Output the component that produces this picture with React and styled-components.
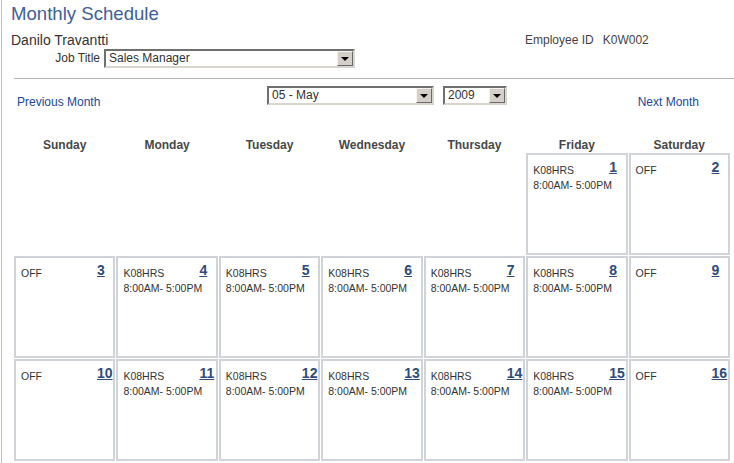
import React from "react";
import styled, { createGlobalStyle } from "styled-components";

const GlobalStyle = createGlobalStyle`
  html, body {
    margin: 0;
    padding: 0;
    background: #fff;
    overflow: hidden;
  }
  body {
    font-family: "Liberation Sans", Arial, sans-serif;
    color: #333;
  }
`;

const Page = styled.div`
  margin-left: 1px;
  border-left: 1px solid #c2c2c2;
  min-height: 463px;
  padding-left: 9px;
  box-sizing: border-box;
`;

const Title = styled.h1`
  margin: 0;
  padding-top: 2px;
  font-size: 18.6px;
  line-height: 24px;
  font-weight: normal;
  color: #40609a;
`;

const NameRow = styled.div`
  display: grid;
  grid-template-columns: 514px auto;
  margin-top: 6px;
  line-height: 16px;
`;

const EmployeeName = styled.div`
  font-size: 14px;
  color: #333;
`;

const EmployeeId = styled.div`
  display: flex;
  gap: 9px;
  font-size: 12px;
  color: #444;
`;

const JobRow = styled.div`
  display: flex;
  align-items: center;
  gap: 4px;
  margin-top: 1px;
  height: 19px;
`;

const Label = styled.label`
  width: 89px;
  text-align: right;
  font-size: 12px;
  line-height: 19px;
  color: #333;
`;

const Divider = styled.div`
  margin: 10px 0 0 3px;
  border-top: 1px solid #b4b4b4;
`;

const NavRow = styled.div`
  display: grid;
  grid-template-columns: 250px auto 1fr;
  align-items: start;
  height: 23px;
  margin-top: 7px;
  padding-left: 6px;
`;

const NavLink = styled.a`
  display: block;
  padding-top: 8px;
  font-size: 12px;
  line-height: 16px;
  color: #21489a;
  text-decoration: none;
  cursor: pointer;
  justify-self: ${(p) => (p.$end ? "end" : "start")};
  margin-right: ${(p) => (p.$end ? "35px" : "0")};
`;

const SelectGroup = styled.div`
  display: flex;
  gap: 9px;
`;

const SelectBox = styled.div`
  box-sizing: border-box;
  display: flex;
  align-items: center;
  width: ${(p) => p.$width}px;
  height: 19px;
  border: 2px solid;
  border-color: #6f6f6f #d8d5ce #d8d5ce #6f6f6f;
  background: #fff;
  padding-left: 3px;
`;

const SelectValue = styled.span`
  flex: 1;
  font-size: 12px;
  line-height: 15px;
  color: #333;
  white-space: nowrap;
  overflow: hidden;
`;

const ArrowButton = styled.span`
  box-sizing: border-box;
  width: 16px;
  height: 15px;
  display: flex;
  align-items: center;
  justify-content: center;
  background: #d4d0c8;
  border: 1px solid;
  border-color: #f4f3ef #6a6a6a #6a6a6a #f4f3ef;

  &::after {
    content: "";
    border-left: 4px solid transparent;
    border-right: 4px solid transparent;
    border-top: 4px solid #000;
    margin-top: 1px;
  }
`;

const Calendar = styled.div`
  display: grid;
  grid-template-columns: repeat(7, 1fr);
  grid-template-rows: 23px repeat(3, 102px);
  column-gap: 1px;
  row-gap: 1px;
  width: 716px;
  margin: 20px 0 0 3px;
`;

const DayName = styled.div`
  padding-top: 9px;
  font-size: 12px;
  line-height: 14px;
  font-weight: bold;
  text-align: center;
  color: #484848;
`;

const Cell = styled.div`
  box-sizing: border-box;
  border: ${(p) => (p.$empty ? "none" : "2px solid #d0d3d8")};
  padding: 4px 0 0 5px;
`;

const CellTop = styled.div`
  display: grid;
  grid-template-columns: 76px auto;
  align-items: start;
`;

const ShiftCode = styled.div`
  margin-top: 4px;
  font-size: 10.5px;
  line-height: 15px;
  color: #333;
`;

const ShiftTime = styled.div`
  font-size: 10.5px;
  line-height: 15px;
  color: #333;
`;

const DayNumber = styled.a`
  font-size: 14px;
  line-height: 16px;
  font-weight: bold;
  color: #2e4b7c;
  text-decoration: underline;
  cursor: pointer;
`;

const days = ["Sunday", "Monday", "Tuesday", "Wednesday", "Thursday", "Friday", "Saturday"];

const weeks = [
  [null, null, null, null, null, 1, 2],
  [3, 4, 5, 6, 7, 8, 9],
  [10, 11, 12, 13, 14, 15, 16],
];

const DayCell = ({ day, weekday }) => {
  if (day === null) return <Cell $empty />;
  const off = weekday === 0 || weekday === 6;
  return (
    <Cell>
      <CellTop>
        <ShiftCode>{off ? "OFF" : "K08HRS"}</ShiftCode>
        <DayNumber>{day}</DayNumber>
      </CellTop>
      {!off && <ShiftTime>8:00AM- 5:00PM</ShiftTime>}
    </Cell>
  );
};

const Select = ({ width, value }) => (
  <SelectBox $width={width}>
    <SelectValue>{value}</SelectValue>
    <ArrowButton />
  </SelectBox>
);

export default function App() {
  return (
    <>
      <GlobalStyle />
      <Page>
        <Title>Monthly Schedule</Title>
        <NameRow>
          <EmployeeName>Danilo Travantti</EmployeeName>
          <EmployeeId>
            <span>Employee ID</span>
            <span>K0W002</span>
          </EmployeeId>
        </NameRow>
        <JobRow>
          <Label>Job Title</Label>
          <Select width={251} value="Sales Manager" />
        </JobRow>
        <Divider />
        <NavRow>
          <NavLink>Previous Month</NavLink>
          <SelectGroup>
            <Select width={167} value="05 - May" />
            <Select width={64} value="2009" />
          </SelectGroup>
          <NavLink $end>Next Month</NavLink>
        </NavRow>
        <Calendar>
          {days.map((d) => (
            <DayName key={d}>{d}</DayName>
          ))}
          {weeks.map((week, wi) =>
            week.map((day, di) => <DayCell key={`${wi}-${di}`} day={day} weekday={di} />)
          )}
        </Calendar>
      </Page>
    </>
  );
}
